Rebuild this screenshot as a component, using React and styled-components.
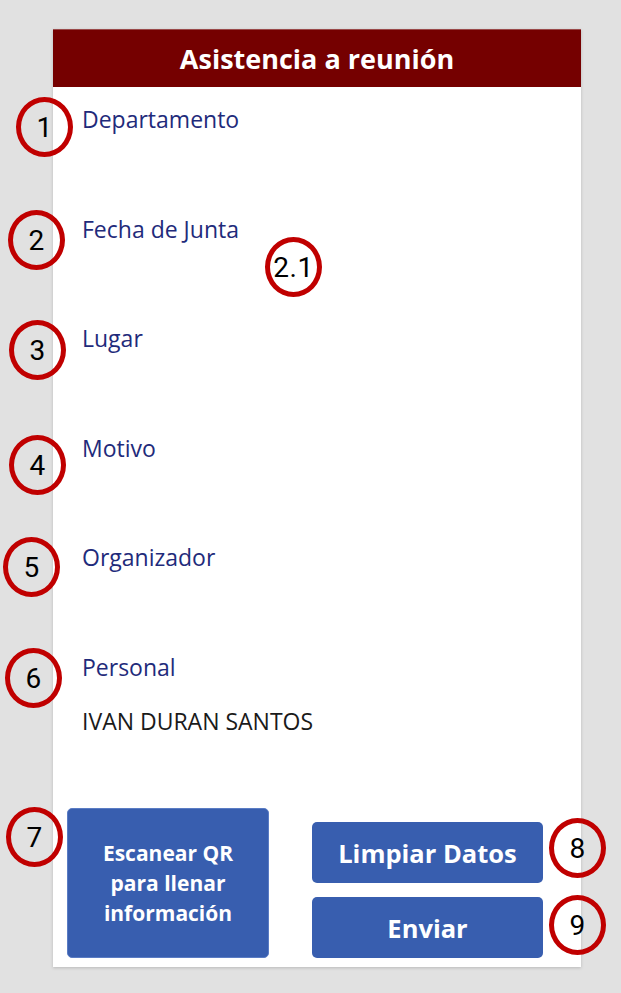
import React from 'react'
import styled, { createGlobalStyle } from 'styled-components'

const GlobalStyle = createGlobalStyle`
  html, body {
    margin: 0;
    padding: 0;
    background: #e1e1e1;
  }
  body {
    font-family: "Open Sans", "Liberation Sans", sans-serif;
  }
`

const fields = ['Departamento', 'Fecha de Junta', 'Lugar', 'Motivo', 'Organizador', 'Personal']

// annotation markers drawn on top of the screenshot
const marks = [
  { n: '1', x: 16, y: 97 },
  { n: '2', x: 8, y: 210 },
  { n: '2.1', x: 265, y: 237 },
  { n: '3', x: 9, y: 320 },
  { n: '4', x: 9, y: 435 },
  { n: '5', x: 3, y: 537 },
  { n: '6', x: 5, y: 648 },
  { n: '7', x: 6, y: 807 },
  { n: '8', x: 549, y: 818 },
  { n: '9', x: 549, y: 895 },
]

export default function App() {
  return (
    <Page>
      <GlobalStyle />
      <Card>
        <Header>Asistencia a reunión</Header>
        <Form>
          {fields.map((f) => (
            <Field key={f}>
              <Label>{f}</Label>
              {f === 'Personal' && <Value>IVAN DURAN SANTOS</Value>}
            </Field>
          ))}
        </Form>
        <Footer>
          <ScanButton>
            Escanear QR
            <br />
            para llenar
            <br />
            información
          </ScanButton>
          <ActionColumn>
            <ActionButton>Limpiar Datos</ActionButton>
            <ActionButton>Enviar</ActionButton>
          </ActionColumn>
        </Footer>
      </Card>
      {marks.map((m) => (
        <Marker key={m.n} $x={m.x} $y={m.y}>
          {m.n}
        </Marker>
      ))}
    </Page>
  )
}

const Page = styled.div`
  position: relative;
  width: 621px;
  height: 993px;
  padding-top: 29px;
  padding-left: 53px;
  box-sizing: border-box;
  overflow: hidden;
`

const Card = styled.div`
  width: 528px;
  height: 938px;
  background: #ffffff;
  box-shadow: 0 1px 3px rgba(0, 0, 0, 0.18);
  display: flex;
  flex-direction: column;
`

const Header = styled.div`
  height: 58px;
  background: #750000;
  color: #ffffff;
  font-weight: 700;
  font-size: 27px;
  display: flex;
  align-items: center;
  justify-content: center;
  border-top: 1px solid #9a4a4a;
  box-sizing: border-box;
`

const Form = styled.div`
  padding: 17px 0 0 29px;
  display: flex;
  flex-direction: column;
`

const Field = styled.div`
  height: 109.5px;
  display: flex;
  flex-direction: column;
`

const Label = styled.div`
  color: #1f2b7b;
  font-size: 23px;
  line-height: 31px;
`

const Value = styled.div`
  color: #1a1a1a;
  font-size: 23px;
  line-height: 31px;
  margin-top: 23px;
`

const Footer = styled.div`
  margin-top: auto;
  padding: 0 38px 9px 14px;
  display: flex;
  justify-content: space-between;
  align-items: flex-end;
`

const ScanButton = styled.div`
  width: 202px;
  height: 150px;
  background: #385eaf;
  border-radius: 5px;
  color: #ffffff;
  font-weight: 700;
  font-size: 21px;
  line-height: 30px;
  text-align: center;
  display: flex;
  align-items: center;
  justify-content: center;
  box-sizing: border-box;
  border: 1px solid #5a7cc4;
`

const ActionColumn = styled.div`
  width: 231px;
  display: flex;
  flex-direction: column;
  gap: 14px;
`

const ActionButton = styled.div`
  height: 61px;
  background: #385eaf;
  border-radius: 5px;
  color: #ffffff;
  font-weight: 700;
  font-size: 25.5px;
  display: flex;
  align-items: center;
  justify-content: center;
`

const Marker = styled.div`
  position: absolute;
  left: ${(p) => p.$x}px;
  top: ${(p) => p.$y}px;
  width: 57px;
  height: 60px;
  box-sizing: border-box;
  border: 5px solid #c00000;
  border-radius: 50%;
  display: flex;
  align-items: center;
  justify-content: center;
  font-family: Roboto, "Liberation Sans", sans-serif;
  font-size: 28px;
  color: #000000;
  letter-spacing: 0.5px;
`
